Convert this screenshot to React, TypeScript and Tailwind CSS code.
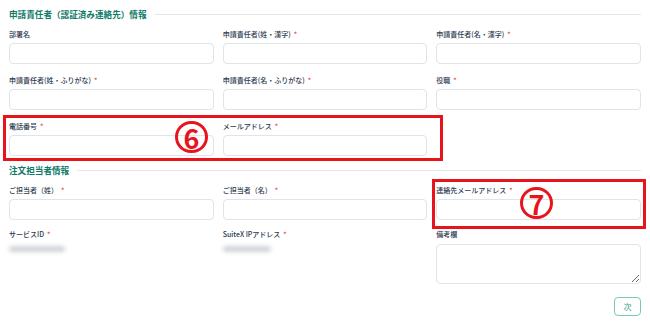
import React from 'react';

const font = { fontFamily: '"Noto Sans CJK JP", "Noto Sans", sans-serif' };

function Field({ label, required }: { label: string; required?: boolean }) {
  return (
    <div className="flex flex-col">
      <label className="h-[10px] leading-[10px] text-[7px] font-medium text-[#2c3a50] mb-[4px] whitespace-nowrap">
        {label}
        {required && <span className="text-[#e53e3e] ml-[3px]">*</span>}
      </label>
      <input className="h-[21px] w-full rounded-[4px] border border-[#e0e3e8] bg-white outline-none" />
    </div>
  );
}

function SectionTitle({ title }: { title: string }) {
  return (
    <div className="flex items-center h-[10px] gap-[8px]">
      <h2 className="text-[8.6px] leading-[10px] font-bold text-[#0f7a68] whitespace-nowrap">{title}</h2>
      <div className="flex-1 h-px bg-[#e5e7eb]" />
    </div>
  );
}

function Blurred({ width }: { width: number }) {
  return (
    <div className="h-[10px] flex items-center">
      <div className="h-[6px] bg-[#cfd3d8] blur-[2px] rounded-sm" style={{ width }} />
    </div>
  );
}

function Marker({ n }: { n: string }) {
  return (
    <div className="w-[33px] h-[32px] rounded-full border-[3px] border-[#e8141c] flex items-center justify-center text-[#e8141c] text-[27px] leading-none font-bold">
      {n}
    </div>
  );
}

export default function App() {
  return (
    <div className="relative w-[650px] h-[325px] overflow-hidden bg-white px-[9px] pt-[9px]" style={font}>
      <SectionTitle title="申請責任者（認証済み連絡先）情報" />

      <div className="mt-[10px] grid grid-cols-3 gap-x-[9px] gap-y-[11px]">
        <Field label="部署名" />
        <Field label="申請責任者(姓・漢字)" required />
        <Field label="申請責任者(名・漢字)" required />
        <Field label="申請責任者(姓・ふりがな)" required />
        <Field label="申請責任者(名・ふりがな)" required />
        <Field label="役職" required />
        <Field label="電話番号" required />
        <Field label="メールアドレス" required />
      </div>

      <div className="mt-[9px]">
        <SectionTitle title="注文担当者情報" />
      </div>

      <div className="mt-[10px] grid grid-cols-3 gap-x-[9px] gap-y-[9px]">
        <Field label="ご担当者（姓）" required />
        <Field label="ご担当者（名）" required />
        <Field label="連絡先メールアドレス" required />

        <div className="flex flex-col">
          <label className="h-[10px] leading-[10px] text-[7px] font-medium text-[#2c3a50] mb-[5px]">
            サービスID<span className="text-[#e53e3e] ml-[3px]">*</span>
          </label>
          <Blurred width={56} />
        </div>
        <div className="flex flex-col">
          <label className="h-[10px] leading-[10px] text-[7px] font-medium text-[#2c3a50] mb-[5px]">
            SuiteX IPアドレス<span className="text-[#e53e3e] ml-[3px]">*</span>
          </label>
          <Blurred width={48} />
        </div>
        <div className="flex flex-col">
          <label className="h-[10px] leading-[10px] text-[7px] font-medium text-[#2c3a50] mb-[5px]">備考欄</label>
          <textarea className="h-[40px] w-full rounded-[4px] border border-[#e0e3e8] bg-white outline-none" />
        </div>
      </div>

      <div className="mt-[13px] flex justify-end">
        <button className="w-[27px] h-[19px] rounded-[4px] border-[1.5px] border-[#7cc7b8] text-[#2a9c88] text-[8px] leading-none bg-white">
          次
        </button>
      </div>

      {/* annotation overlays */}
      <div className="absolute left-[3px] top-[115px] w-[440px] h-[46px] border-[3px] border-[#e8141c] pointer-events-none" />
      <div className="absolute left-[175px] top-[121px] pointer-events-none">
        <Marker n="6" />
      </div>
      <div className="absolute left-[432px] top-[179px] w-[214px] h-[50px] border-[3px] border-[#e8141c] pointer-events-none" />
      <div className="absolute left-[520px] top-[187px] pointer-events-none">
        <Marker n="7" />
      </div>
    </div>
  );
}
